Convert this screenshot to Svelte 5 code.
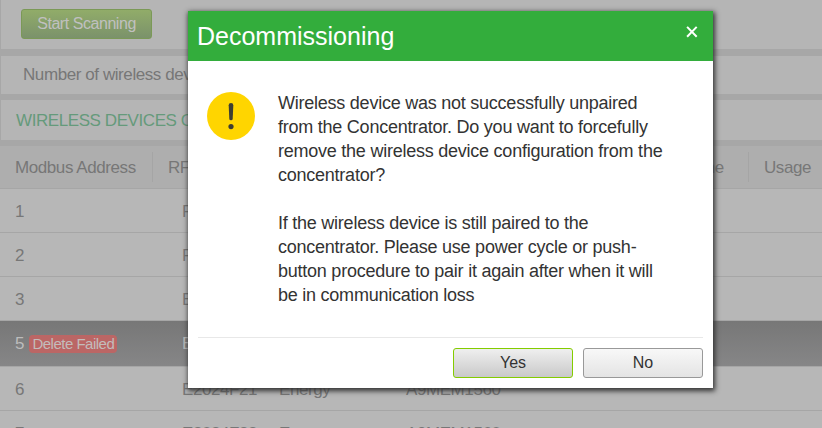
<script lang="ts">
  type Device = {
    address: number;
    rfId: string;
    type?: string;
    reference?: string;
    failed?: boolean;
  };

  const devices: Device[] = [
    { address: 1, rfId: 'FE01A2C4' },
    { address: 2, rfId: 'FE01A2D8' },
    { address: 3, rfId: 'E2024F19' },
    { address: 5, rfId: 'E2024F20', failed: true },
    { address: 6, rfId: 'E2024F21', type: 'Energy', reference: 'A9MEM1560' },
    { address: 7, rfId: 'E2024F22', type: 'Energy', reference: 'A9MEM1560' },
  ];
</script>

<div class="page">
  <section class="panel toolbar">
    <button class="scan">Start Scanning</button>
  </section>
  <section class="panel count">Number of wireless devices</section>
  <section class="panel heading">WIRELESS DEVICES CONFIGURATION</section>

  <div class="table">
    <div class="row head">
      <span class="cell first">Modbus Address</span>
      <span class="cell rf">RF Id</span>
      <span class="cell name">Name</span>
      <span class="cell usage">Usage</span>
    </div>
    {#each devices as device}
      <div class="row" class:selected={device.failed}>
        <span class="address">
          {device.address}
          {#if device.failed}<span class="tag">Delete Failed</span>{/if}
        </span>
        <span class="id">{device.rfId}</span>
        <span class="type">{device.type ?? ''}</span>
        <span>{device.reference ?? ''}</span>
      </div>
    {/each}
  </div>

  <div class="dialog" role="dialog" aria-label="Decommissioning">
    <header>
      <span class="title">Decommissioning</span>
      <button class="close" aria-label="Close">
        <svg width="12" height="12" viewBox="0 0 12 12">
          <path d="M1.1 0.9 10.7 10.8M10.7 0.9 1.1 10.8" fill="none" stroke="#fff" stroke-width="2" />
        </svg>
      </button>
    </header>
    <div class="content">
      <svg class="warning" width="48" height="48" viewBox="0 0 48 48">
        <circle cx="24" cy="24" r="24" fill="#ffd500" />
        <path
          d="M21.7 13.3Q21.7 11 24 11Q26.3 11 26.3 13.3L25.7 27Q25.6 28.3 24 28.3Q22.4 28.3 22.3 27Z"
          fill="#3d3d32"
        />
        <circle cx="24" cy="34.6" r="2.6" fill="#3d3d32" />
      </svg>
      <div class="message">
        <p>
          Wireless device was not successfully unpaired<br />
          from the Concentrator. Do you want to forcefully<br />
          remove the wireless device configuration from the<br />
          concentrator?
        </p>
        <p>
          If the wireless device is still paired to the<br />
          concentrator. Please use power cycle or push-<br />
          button procedure to pair it again after when it will<br />
          be in communication loss
        </p>
      </div>
    </div>
    <footer>
      <button class="action yes">Yes</button>
      <button class="action">No</button>
    </footer>
  </div>
</div>

<style>
  :global(body) {
    margin: 0;
    overflow: hidden;
  }
  .page {
    position: relative;
    width: 822px;
    height: 428px;
    overflow: hidden;
    background: #a7a7a7;
    color: #777;
    font: 17px 'Liberation Sans', Arial, sans-serif;
    letter-spacing: -0.42px;
    white-space: nowrap;
  }
  button {
    box-sizing: border-box;
    padding: 0;
    font-family: inherit;
  }
  .panel {
    box-sizing: border-box;
    display: flex;
    align-items: center;
    margin-left: 1px;
    background: #b5b5b5;
  }
  .toolbar {
    height: 49px;
    padding-left: 20px;
  }
  .scan {
    width: 131px;
    height: 30px;
    margin-bottom: 1px;
    border: 1px solid #7b9957;
    border-radius: 3px;
    background: linear-gradient(#91ac69, #7b926b);
    color: #c0c0c0;
    font-size: 16px;
    letter-spacing: -0.45px;
  }
  .count {
    height: 38px;
    margin-top: 7px;
    padding-left: 22px;
    letter-spacing: -0.42px;
  }
  .heading {
    height: 40px;
    margin-top: 6px;
    padding-top: 2px;
    padding-left: 15px;
    color: #659a7b;
  }
  .table {
    margin-top: 6px;
  }
  .row {
    box-sizing: border-box;
    display: flex;
    align-items: center;
    height: 44px;
    padding-top: 2px;
    border-bottom: 1px solid #a6a6a6;
    background: #b7b7b7;
  }
  .head {
    height: 43px;
    padding-top: 0;
    background: #aeaeae;
  }
  .cell {
    box-sizing: border-box;
    height: 30px;
    padding-left: 15px;
    border-right: 1px solid #a5a5a5;
    line-height: 32px;
  }
  .first {
    width: 153px;
  }
  .rf {
    width: 500px;
  }
  .name {
    width: 96px;
    padding-left: 27px;
  }
  .usage {
    border-right: 0;
  }
  .address {
    box-sizing: border-box;
    width: 182px;
    padding-left: 15px;
  }
  .id {
    width: 97px;
  }
  .type {
    width: 127px;
  }
  .selected {
    height: 46px;
    padding-top: 0;
    background: linear-gradient(#777, #868687);
    color: #bcbcbc;
  }
  .tag {
    display: inline-block;
    width: 88px;
    height: 18px;
    margin-left: 1px;
    border-radius: 4px;
    background: #bb6665;
    color: #c3bcbb;
    font-size: 15px;
    letter-spacing: -0.5px;
    line-height: 17px;
    text-align: center;
  }
  .dialog {
    position: absolute;
    top: 11px;
    left: 188px;
    box-sizing: border-box;
    width: 525px;
    height: 377px;
    background: #fff;
    box-shadow: 1px 2px 5px 1px #333;
    color: #333;
  }
  header {
    display: flex;
    align-items: center;
    justify-content: space-between;
    height: 50px;
    padding: 0 15px 0 9px;
    background: #33ad3c;
    color: #fff;
  }
  .title {
    font-size: 25px;
    letter-spacing: 0;
  }
  .close {
    width: 12px;
    height: 12px;
    margin-bottom: 8px;
    border: 0;
    background: none;
    line-height: 0;
  }
  .content {
    display: flex;
    box-sizing: border-box;
    height: 277px;
    margin: 0 10px;
    padding: 30px 0 0 9px;
    border-bottom: 1px solid #e8e8e8;
  }
  .warning {
    margin-top: 1px;
  }
  .message {
    margin-left: 23px;
    font-size: 18px;
    letter-spacing: -0.24px;
    line-height: 24px;
  }
  p {
    margin: 0 0 24px;
  }
  footer {
    display: flex;
    justify-content: flex-end;
    gap: 10px;
    padding: 10px 10px 0;
  }
  .action {
    width: 120px;
    height: 30px;
    border: 1px solid #999;
    border-radius: 3px;
    background: linear-gradient(#f8f8f8, #e4e4e4);
    color: #333;
    font-size: 16px;
  }
  .yes {
    border-color: #84cc00;
    background: linear-gradient(#efefef, #c9c9c9);
  }
</style>
